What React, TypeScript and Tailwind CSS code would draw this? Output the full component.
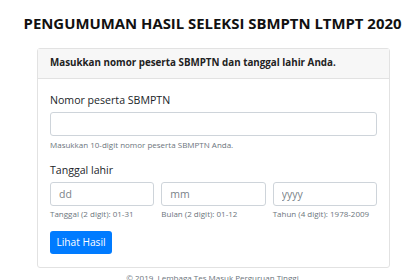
import React from "react";

export default function App() {
  return (
    <div className="w-[420px] h-[280px] overflow-hidden bg-white text-[#212529] font-['Open_Sans',_'Noto_Sans',_sans-serif]">
      <h1 className="pt-[13px] pl-[5px] text-center text-[14.9px] leading-[20px] font-bold text-[#111]">
        PENGUMUMAN HASIL SELEKSI SBMPTN LTMPT 2020
      </h1>
      <div className="ml-[37px] mt-[15px] w-[353px] rounded-[3px] border border-[#e2e2e2]">
        <div className="flex h-[30px] items-center border-b border-[#e2e2e2] bg-[#f7f7f7] px-[12px] text-[9.8px] font-bold text-[#222]">
          Masukkan nomor peserta SBMPTN dan tanggal lahir Anda.
        </div>
        <div className="px-[12px] pt-[13px] pb-[13px]">
          <div className="text-[10.6px] leading-[16px]">Nomor peserta SBMPTN</div>
          <input
            className="mt-[4px] block h-[24px] w-full rounded-[3px] border border-[#ced4da] bg-white px-[8px] text-[10.5px] outline-none"
            type="text"
          />
          <div className="mt-[3px] text-[8px] leading-[12px] text-[#6c757d]">
            Masukkan 10-digit nomor peserta SBMPTN Anda.
          </div>
          <div className="mt-[11px] text-[10.6px] leading-[16px]">Tanggal lahir</div>
          <div className="mt-[4px] grid grid-cols-3 gap-[7px]">
            {[
              ["dd", "Tanggal (2 digit): 01-31"],
              ["mm", "Bulan (2 digit): 01-12"],
              ["yyyy", "Tahun (4 digit): 1978-2009"],
            ].map(([ph, help]) => (
              <div key={ph}>
                <input
                  className="block h-[24px] w-full rounded-[3px] border border-[#ced4da] bg-white px-[8px] text-[10.5px] outline-none placeholder:text-[#7a8288]"
                  placeholder={ph}
                  type="text"
                />
                <div className="mt-[2px] text-[8px] leading-[12px] text-[#6c757d]">{help}</div>
              </div>
            ))}
          </div>
          <button className="mt-[11px] flex h-[23px] w-[62px] items-center justify-center rounded-[3px] bg-[#007bff] text-[10.2px] text-white">
            Lihat Hasil
          </button>
        </div>
      </div>
      <div className="mt-[4px] pl-[5px] text-center text-[8px] leading-[12px] text-[#6c757d]">
        © 2019, Lembaga Tes Masuk Perguruan Tinggi
      </div>
    </div>
  );
}
